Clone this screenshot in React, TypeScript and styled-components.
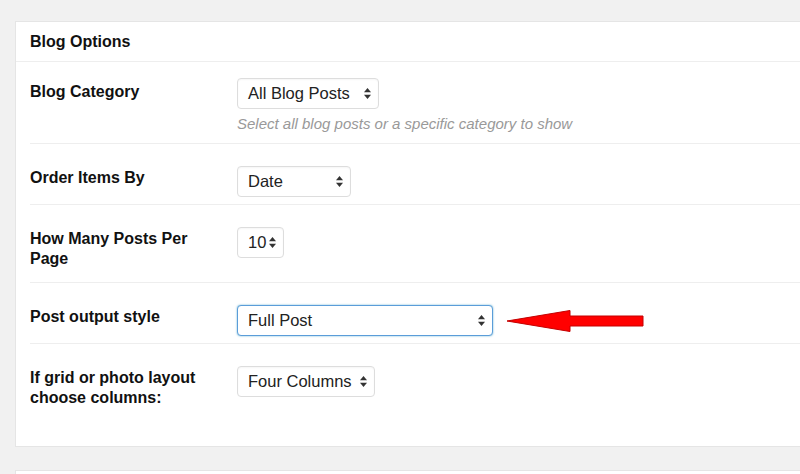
import React from "react";
import styled, { createGlobalStyle } from "styled-components";

interface Option {
  label: string;
  value: string;
  width: number;
  hint?: string;
  focused?: boolean;
  pointer?: boolean;
}

const options: Option[] = [
  {
    label: "Blog Category",
    value: "All Blog Posts",
    width: 142,
    hint: "Select all blog posts or a specific category to show",
  },
  { label: "Order Items By", value: "Date", width: 114 },
  { label: "How Many Posts Per Page", value: "10", width: 47 },
  { label: "Post output style", value: "Full Post", width: 256, focused: true, pointer: true },
  { label: "If grid or photo layout choose columns:", value: "Four Columns", width: 138 },
];

const UpDown = () => (
  <svg width="7" height="11" viewBox="0 0 7 11">
    <path d="M3.5 0 L7 4.2 L0 4.2 Z" fill="#333" />
    <path d="M3.5 11 L7 6.8 L0 6.8 Z" fill="#333" />
  </svg>
);

const RedArrow = () => (
  <svg width="138" height="24" viewBox="0 0 138 24">
    <path
      d="M0 12 L63 1.5 L63 7 L136 7 L136 17 L63 17 L63 22.5 Z"
      fill="#ff0000"
      stroke="#c40000"
      strokeWidth="1"
    />
  </svg>
);

const App = () => {
  return (
    <>
      <GlobalStyle />
      <Page>
        <Card>
          <CardTitle>Blog Options</CardTitle>
          <CardBody>
            {options.map((opt, i) => (
              <Row key={opt.label} $last={i === options.length - 1}>
                <Label $first={i === 0}>{opt.label}</Label>
                <Field $first={i === 0}>
                  <FieldLine>
                    <SelectBox style={{ width: opt.width }} $focused={opt.focused}>
                      <SelectValue>{opt.value}</SelectValue>
                      <UpDown />
                    </SelectBox>
                    {opt.pointer && <RedArrow />}
                  </FieldLine>
                  {opt.hint && <Hint>{opt.hint}</Hint>}
                </Field>
              </Row>
            ))}
          </CardBody>
        </Card>
        <NextCard />
      </Page>
    </>
  );
};

const GlobalStyle = createGlobalStyle`
  html, body {
    margin: 0;
    padding: 0;
    background: #f1f1f1;
    overflow: hidden;
  }
  body {
    font-family: "Liberation Sans", Arial, sans-serif;
    color: #23282d;
  }
`;

const Page = styled.div`
  padding: 21px 0 0 15px;
  height: 474px;
  box-sizing: border-box;
  overflow: hidden;
`;

const Card = styled.div`
  background: #fff;
  border: 1px solid #e5e5e5;
  margin-right: -20px;
`;

const NextCard = styled(Card)`
  margin-top: 23px;
  height: 60px;
`;

const CardTitle = styled.h3`
  margin: 0;
  padding: 10px 14px 9px;
  font-size: 16px;
  line-height: 20px;
  font-weight: bold;
  color: #111;
  border-bottom: 1px solid #eeeeee;
`;

const CardBody = styled.div`
  padding: 0 0 25px 14px;
`;

const Row = styled.div<{ $last?: boolean }>`
  display: grid;
  grid-template-columns: 207px 1fr;
  border-bottom: ${(p) => (p.$last ? "none" : "1px solid #eeeeee")};
`;

const Label = styled.div<{ $first?: boolean }>`
  padding: ${(p) => (p.$first ? "20px" : "24px")} 17px 13px 0;
  font-size: 16px;
  line-height: 20px;
  font-weight: bold;
  color: #111;
`;

const Field = styled.div<{ $first?: boolean }>`
  padding: ${(p) => (p.$first ? "16px" : "22px")} 0 ${(p) => (p.$first ? "9px" : "7px")} 0;
`;

const FieldLine = styled.div`
  display: flex;
  align-items: center;
  gap: 14px;
`;

const SelectBox = styled.div<{ $focused?: boolean }>`
  box-sizing: border-box;
  height: 31px;
  display: flex;
  align-items: center;
  justify-content: space-between;
  padding: 0 7px 0 10px;
  background: #fff;
  border: 1px solid ${(p) => (p.$focused ? "#5b9dd9" : "#dddddd")};
  border-radius: 4px;
  box-shadow: ${(p) =>
    p.$focused ? "0 0 2px rgba(30, 140, 190, 0.7)" : "inset 0 1px 2px rgba(0, 0, 0, 0.04)"};
  font-size: 16.5px;
  color: #222;
`;

const SelectValue = styled.span`
  white-space: nowrap;
`;

const Hint = styled.div`
  margin-top: 5px;
  font-size: 15px;
  line-height: 20px;
  font-style: italic;
  color: #999;
`;

export default App;
